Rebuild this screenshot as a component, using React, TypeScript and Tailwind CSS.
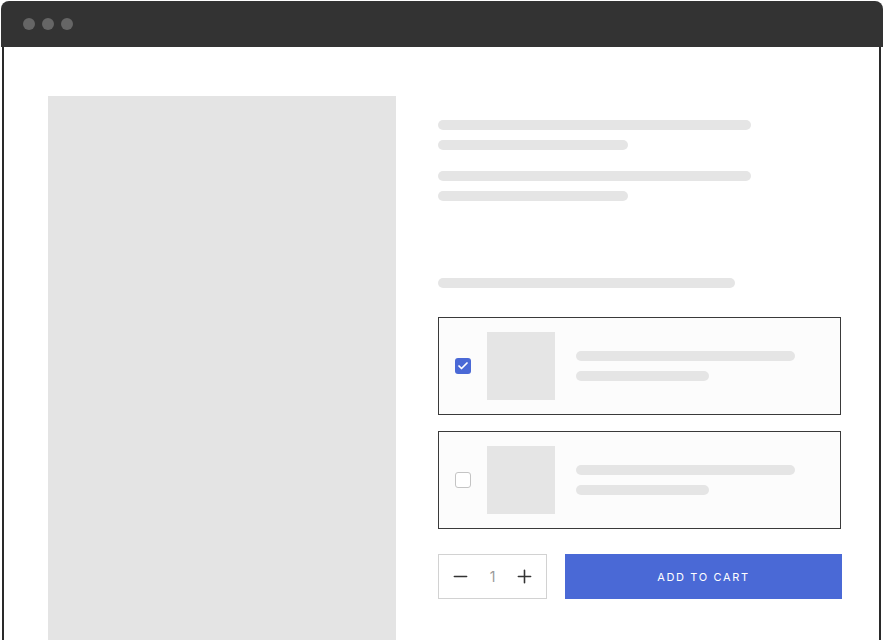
import { Check, Minus, Plus } from "lucide-react";

function Bar({ w }: { w: string }) {
  return <div className={`h-[10px] rounded-full bg-[#e5e5e5] ${w}`} />;
}

interface OptionCardProps {
  checked: boolean;
}

function OptionCard({ checked }: OptionCardProps) {
  return (
    <div className="flex h-[98px] w-[403px] items-center border border-[#3a3a3a] bg-[#fcfcfc] pl-4">
      {checked ? (
        <div className="flex h-4 w-4 items-center justify-center rounded-[3px] bg-[#4a69d6]">
          <Check className="h-3 w-3 text-white" strokeWidth={3.5} />
        </div>
      ) : (
        <div className="h-4 w-4 rounded-[3px] border-[1.5px] border-[#c4c4c4] bg-white" />
      )}
      <div className="ml-4 h-[68px] w-[68px] bg-[#e5e5e5]" />
      <div className="ml-[21px] flex flex-col gap-[10px]">
        <Bar w="w-[219px]" />
        <Bar w="w-[133px]" />
      </div>
    </div>
  );
}

export default function App() {
  return (
    <div className="h-[640px] w-[883px] overflow-hidden bg-white font-['Inter',sans-serif]">
      <div className="ml-[1px] mt-[1px] flex h-[46px] w-[882px] items-center gap-[7px] rounded-t-[8px] bg-[#333333] pl-[22px]">
        <span className="h-3 w-3 rounded-full bg-[#666666]" />
        <span className="h-3 w-3 rounded-full bg-[#666666]" />
        <span className="h-3 w-3 rounded-full bg-[#666666]" />
      </div>
      <div className="ml-[2px] flex h-[600px] w-[879px] border-x-2 border-[#2a2a2a] pl-[44px] pt-[49px]">
        <div className="h-[560px] w-[348px] bg-[#e4e4e4]" />
        <div className="ml-[42px] flex flex-col pt-6">
          <Bar w="w-[313px]" />
          <div className="mt-[10px]"><Bar w="w-[190px]" /></div>
          <div className="mt-[21px]"><Bar w="w-[313px]" /></div>
          <div className="mt-[10px]"><Bar w="w-[190px]" /></div>
          <div className="mt-[77px]"><Bar w="w-[297px]" /></div>
          <div className="mt-[29px] flex flex-col gap-4">
            <OptionCard checked />
            <OptionCard checked={false} />
          </div>
          <div className="mt-[25px] flex gap-[18px]">
            <div className="flex h-[45px] w-[109px] items-center justify-between border-[1.5px] border-[#d2d2d2] px-[11px]">
              <Minus className="h-[21px] w-[21px] text-[#333]" strokeWidth={1.8} />
              <span className="text-[14px] text-[#9a9a9a]">1</span>
              <Plus className="h-[21px] w-[21px] text-[#333]" strokeWidth={1.8} />
            </div>
            <button className="flex h-[45px] w-[277px] items-center justify-center bg-[#4a69d6] pt-[2px] text-[11px] font-normal tracking-[0.15em] text-white">
              ADD TO CART
            </button>
          </div>
        </div>
      </div>
    </div>
  );
}
